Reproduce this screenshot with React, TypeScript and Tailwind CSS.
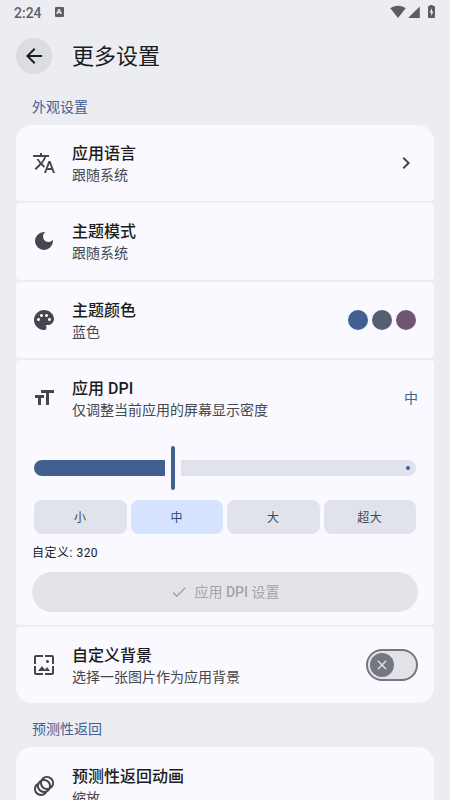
import { ReactNode, useState } from "react";
import type { IconType } from "react-icons";
import {
  MdAnimation,
  MdArrowBack,
  MdCheck,
  MdChevronRight,
  MdClose,
  MdDarkMode,
  MdFormatSize,
  MdPalette,
  MdTranslate,
  MdWallpaper,
} from "react-icons/md";

const sizes = ["小", "中", "大", "超大"];

function StatusBar() {
  return (
    <div className="flex h-6 items-center justify-between pl-3.5 pr-[14px] text-[#5e5e60]">
      <div className="flex items-center gap-[13px] pt-[2px]">
        <span className="text-[14px] font-medium leading-5">2:24</span>
        <span className="relative -top-px flex h-[10px] w-[9px] justify-center rounded-[1px] bg-[#5e5e60] text-[8px] font-black leading-[10px] text-[#ecedf2]">
          A
        </span>
      </div>
      <svg width="46" height="14" viewBox="0 0 46 14" fill="currentColor">
        <path d="M0.3 3.3C2.3 1.6 5 .7 8 .7s5.7.9 7.7 2.6L8 12.9z" />
        <path d="M18.7 12.9V12.3L29.8 1.5v11.4z" />
        <path d="M39.6 0h3.2v1.1h1.3c.5 0 .9.4.9.9v10c0 .5-.4.9-.9.9h-5.2c-.5 0-.9-.4-.9-.9V2c0-.5.4-.9.9-.9h.7z" />
        <path d="M42 3.2L39.5 7.5h1.6v3.2L43.6 6.4H42z" fill="#ecedf2" />
      </svg>
    </div>
  );
}

function SectionTitle({ children }: { children: ReactNode }) {
  return <h2 className="pl-4 text-sm leading-5 text-[#415f91]">{children}</h2>;
}

function Row({
  icon: Icon,
  title,
  subtitle,
  children,
}: {
  icon: IconType;
  title: string;
  subtitle: string;
  children?: ReactNode;
}) {
  return (
    <div className="flex h-[76.5px] items-center px-4">
      <Icon size={24} className="shrink-0 text-[#44474e]" />
      <div className="ml-4 flex-1">
        <p className="pt-px text-base font-medium leading-[23px] text-[#191c20]">{title}</p>
        <p className="text-sm leading-5 text-[#44474e]">{subtitle}</p>
      </div>
      {children}
    </div>
  );
}

export default function App() {
  const [size, setSize] = useState("中");
  const [customBackground, setCustomBackground] = useState(false);

  return (
    <div className="h-[800px] w-[450px] overflow-hidden bg-[#ecedf2] font-['Roboto','Noto_Sans_CJK_SC',sans-serif]">
      <StatusBar />

      <header className="flex h-16 items-center gap-5 px-4">
        <button
          type="button"
          className="flex size-9 items-center justify-center rounded-full bg-[#dcdde2] text-[#191c20]"
        >
          <MdArrowBack size={24} />
        </button>
        <h1 className="pt-0.5 text-[22px] leading-7 text-[#191c20]">更多设置</h1>
      </header>

      <main className="px-4 pt-[8.6px]">
        <SectionTitle>外观设置</SectionTitle>

        <div className="mt-2 flex flex-col gap-[2px]">
          <section className="rounded-t-2xl rounded-b-[4px] bg-[#faf9ff]">
            <Row icon={MdTranslate} title="应用语言" subtitle="跟随系统">
              <MdChevronRight size={24} className="text-[#44474e]" />
            </Row>
          </section>

          <section className="rounded-[4px] bg-[#faf9ff]">
            <Row icon={MdDarkMode} title="主题模式" subtitle="跟随系统" />
          </section>

          <section className="rounded-[4px] bg-[#faf9ff]">
            <Row icon={MdPalette} title="主题颜色" subtitle="蓝色">
              <div className="mr-0.5 flex gap-1">
                <span className="size-5 rounded-full bg-[#415f91]" />
                <span className="size-5 rounded-full bg-[#565f71]" />
                <span className="size-5 rounded-full bg-[#705575]" />
              </div>
            </Row>
          </section>

          <section className="h-[264.7px] rounded-[4px] bg-[#faf9ff]">
            <Row icon={MdFormatSize} title="应用 DPI" subtitle="仅调整当前应用的屏幕显示密度">
              <span className="text-sm leading-5 text-[#415f91]">{size}</span>
            </Row>

            <div className="mt-[9.8px] flex h-11 items-center gap-1.5 px-[18px]">
              <div className="h-4 w-[131px] rounded-l-full rounded-r-[2px] bg-[#415f91]" />
              <div className="h-11 w-1 rounded-full bg-[#415f91]" />
              <div className="flex h-4 flex-1 items-center justify-end rounded-l-[2px] rounded-r-full bg-[#e0e2ec] pr-1.5">
                <span className="size-1 rounded-full bg-[#415f91]" />
              </div>
            </div>

            <div className="mt-[10px] grid grid-cols-4 gap-1 px-[18px]">
              {sizes.map((item) => (
                <button
                  key={item}
                  type="button"
                  onClick={() => setSize(item)}
                  className={`h-[34px] rounded-lg pt-0.5 text-xs tracking-[0.4px] ${
                    item === size
                      ? "bg-[#d6e3ff] text-[#284777]"
                      : "bg-[#e0e2ec] text-[#44474e]"
                  }`}
                >
                  {item}
                </button>
              ))}
            </div>

            <p className="mt-[10.6px] px-4 text-xs leading-4 tracking-[0.5px] text-[#191c20]">
              自定义: 320
            </p>

            <div className="mt-[11.5px] px-4">
              <button
                type="button"
                disabled
                className="flex h-10 w-full items-center justify-center gap-1.5 rounded-full bg-[#e4e3e8] text-sm text-[#a4a4a9]"
              >
                <MdCheck size={18} />
                <span>
                  应用 <span className="font-medium">DPI</span> 设置
                </span>
              </button>
            </div>
          </section>

          <section className="rounded-t-[4px] rounded-b-2xl bg-[#faf9ff]">
            <Row icon={MdWallpaper} title="自定义背景" subtitle="选择一张图片作为应用背景">
              <button
                type="button"
                role="switch"
                aria-checked={customBackground}
                onClick={() => setCustomBackground(!customBackground)}
                className={`flex h-8 w-[52px] items-center rounded-full border-2 border-[#74777f] bg-[#e2e2e9] px-0.5 ${
                  customBackground ? "justify-end" : "justify-start"
                }`}
              >
                <span className="flex size-6 items-center justify-center rounded-full bg-[#74777f] text-[#e2e2e9]">
                  <MdClose size={16} />
                </span>
              </button>
            </Row>
          </section>
        </div>

        <div className="mt-4">
          <SectionTitle>预测性返回</SectionTitle>
        </div>

        <section className="mt-2 rounded-t-2xl bg-[#faf9ff]">
          <Row icon={MdAnimation} title="预测性返回动画" subtitle="缩放" />
        </section>
      </main>
    </div>
  );
}
